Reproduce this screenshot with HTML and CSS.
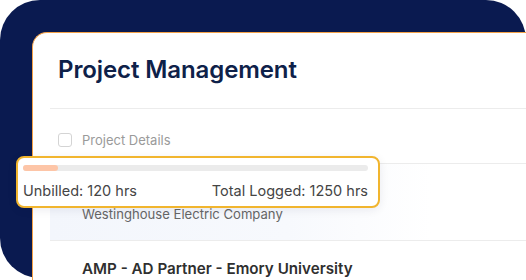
FILE: index.html
```html
<!DOCTYPE html>
<html lang="en">
<head>
    <meta charset="UTF-8">
    <meta name="viewport" content="width=device-width, initial-scale=1.0">
    <title>Project Management</title>
    <link rel="stylesheet" href="styles.css">
</head>
<body>
    <div class="frame">
        <div class="card">
            <h1 class="title">Project Management</h1>

            <div class="list">
                <div class="list-head">
                    <span class="check"></span>
                    <span class="head-label">Project Details</span>
                </div>

                <div class="row row-active">
                    <div class="row-spacer"></div>
                    <div class="row-client">Westinghouse Electric Company</div>
                </div>

                <div class="row">
                    <div class="row-name">AMP - AD Partner - Emory University</div>
                </div>
            </div>

            <!-- hours popover over the first row -->
            <div class="hours">
                <div class="bar"><div class="bar-fill" style="width: 35px"></div></div>
                <div class="hours-text">
                    <span>Unbilled: 120 hrs</span>
                    <span>Total Logged: 1250 hrs</span>
                </div>
            </div>
        </div>
    </div>
</body>
</html>
```

FILE: styles.css
```css
html, body {
    margin: 0;
    background: #ffffff;
    overflow: hidden;
}
body {
    font-family: Inter, "Noto Sans", sans-serif;
    width: 526px;
    height: 280px;
}
.frame {
    width: 526px;
    height: 278px;
    box-sizing: border-box;
    padding: 32px 0 0 32px;
    background: #0a1a50;
    border-radius: 40px;
}
.card {
    position: relative;
    width: 493px;
    height: 247px;
    background: #ffffff;
    border-top: 1px solid #f4a147;
    border-left: 1px solid #f4a147;
    border-radius: 15px 0 0 0;
}
.title {
    margin: 0;
    padding: 22px 0 0 25px;
    height: 53px;
    font-size: 24px;
    line-height: 30px;
    font-weight: 600;
    color: #0e2149;
    letter-spacing: -0.1px;
}
.list {
    margin-left: 17px;
}
.list-head {
    display: flex;
    align-items: center;
    gap: 10px;
    height: 46px;
    padding: 8px 0 0 8px;
    border-top: 1px solid #ececec;
    border-bottom: 1px solid #ececec;
}
.check {
    width: 12px;
    height: 12px;
    border: 1px solid #d4d4d4;
    border-radius: 3px;
}
.head-label {
    font-size: 13px;
    color: #9a9a9a;
}
.row {
    padding: 18px 0 0 32px;
    height: 20px;
}
.row-active {
    padding-top: 15px;
    height: 61px;
    border-bottom: 1px solid #ececec;
    background: linear-gradient(90deg, #f3f6fc 0%, #f7f9fd 50%, #ffffff 80%);
}
.row-spacer {
    height: 20px;
}
.row-name {
    font-size: 15.2px;
    line-height: 20px;
    font-weight: 600;
    color: #2f2f2f;
}
.row-client {
    margin-top: 6px;
    font-size: 13.1px;
    line-height: 18px;
    color: #666666;
}
.hours {
    position: absolute;
    left: -17px;
    top: 123px;
    width: 364px;
    height: 52px;
    box-sizing: border-box;
    padding: 7px 10px 0 5px;
    background: #ffffff;
    border: 2px solid #f1b52e;
    border-radius: 8px;
    box-shadow: 0 2px 10px rgba(20, 30, 60, 0.08);
}
.bar {
    height: 6px;
    background: #ebebeb;
    border-radius: 3px;
}
.bar-fill {
    height: 6px;
    background: #fdc5a7;
    border-radius: 3px;
}
.hours-text {
    display: flex;
    justify-content: space-between;
    margin-top: 10px;
    font-size: 14.5px;
    line-height: 20px;
    color: #454545;
}
```
